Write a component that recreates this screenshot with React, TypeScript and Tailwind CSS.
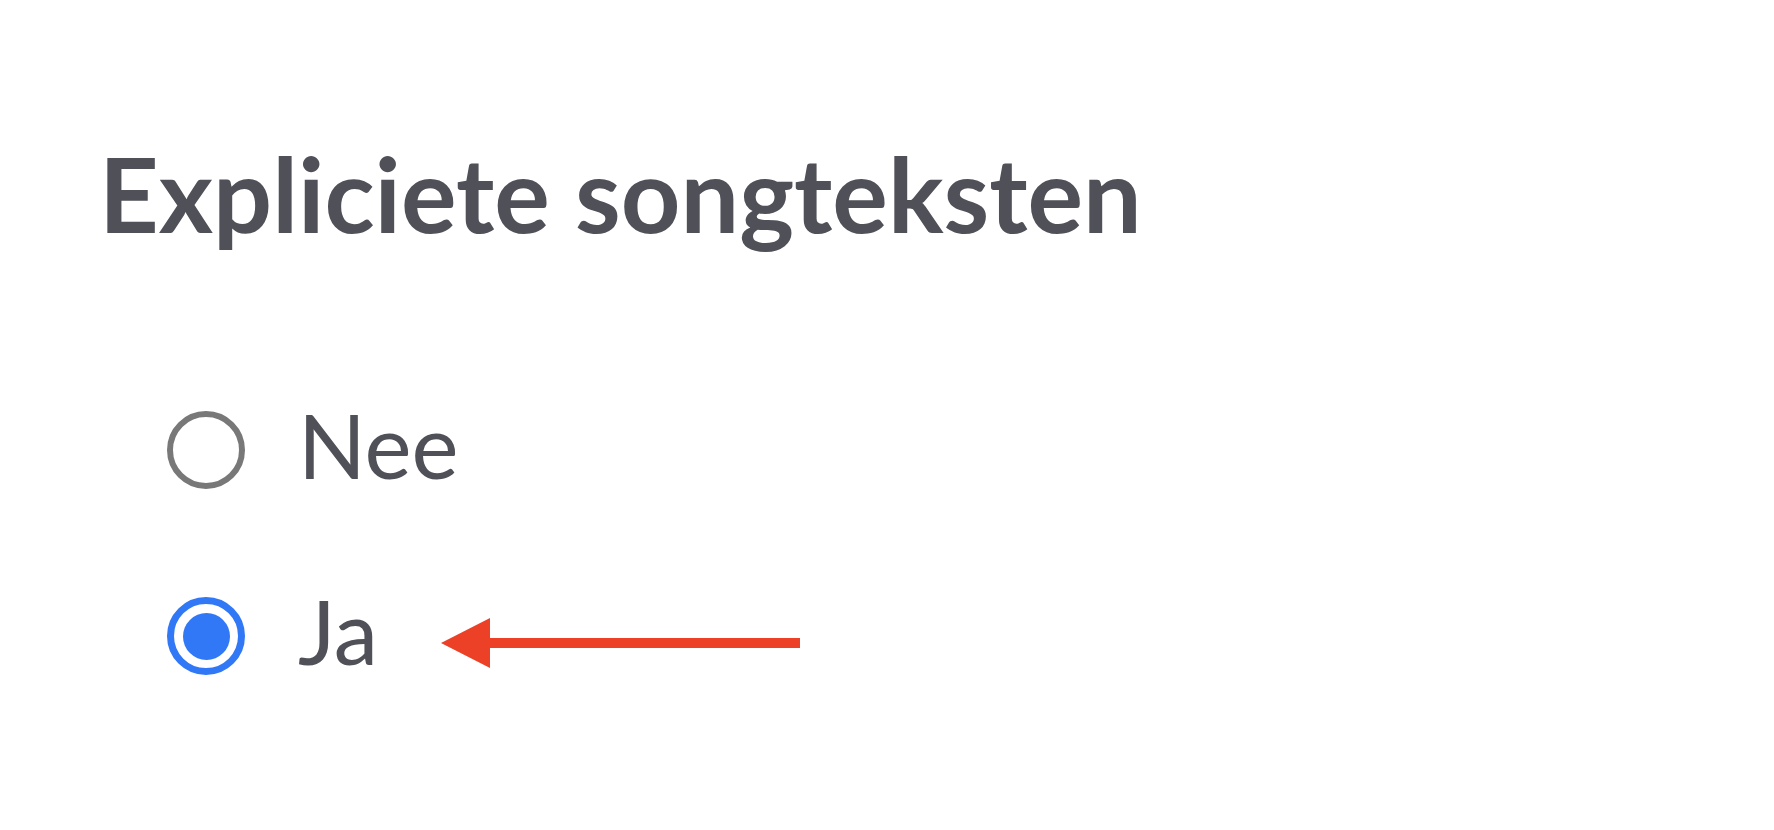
import { useState } from "react";

const options = [
  { value: "no", label: "Nee" },
  { value: "yes", label: "Ja" },
];

function Radio({ checked }: { checked: boolean }) {
  return checked ? (
    <span className="flex h-[78px] w-[78px] shrink-0 items-center justify-center rounded-full border-[7px] border-[#3178f6]">
      <span className="h-[47px] w-[47px] rounded-full bg-[#3178f6]" />
    </span>
  ) : (
    <span className="h-[78px] w-[78px] shrink-0 rounded-full border-[6px] border-[#787878]" />
  );
}

function ArrowLeft() {
  return (
    <svg width="362" height="52" viewBox="0 0 362 52" className="ml-[63px] mt-[14px]">
      <polygon points="0,26 49,1 49,51" fill="#ec4027" />
      <rect x="48" y="21" width="311" height="10" fill="#ec4027" />
    </svg>
  );
}

export default function App() {
  const [value, setValue] = useState("yes");

  return (
    <div className="h-[830px] w-[1774px] bg-white pl-[99px] pt-[141px] font-['Lato','Noto_Sans',sans-serif] text-[#4f5058]">
      <h1 className="text-[104px] font-bold leading-[104px]">Expliciete songteksten</h1>

      <div className="mt-[166px] flex flex-col gap-[108px] pl-[68px]">
        {options.map((o) => (
          <label
            key={o.value}
            className="flex h-[78px] cursor-pointer items-center"
            onClick={() => setValue(o.value)}
          >
            <Radio checked={value === o.value} />
            <span className="ml-[53px] pb-[10px] text-[89px] leading-[78px]">{o.label}</span>
            {o.value === "yes" && <ArrowLeft />}
          </label>
        ))}
      </div>
    </div>
  );
}
